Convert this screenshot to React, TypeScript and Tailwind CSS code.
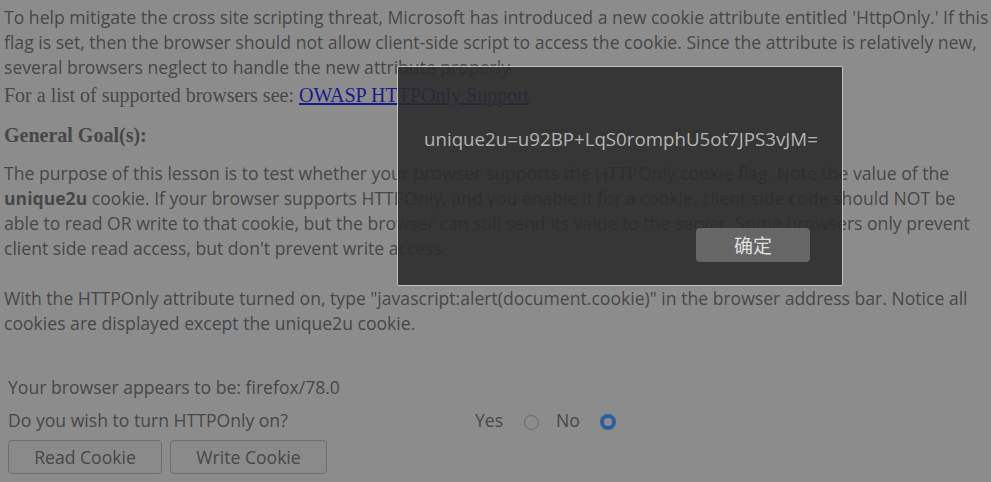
import React from 'react';

const sans = "font-['Open_Sans','Noto_Sans',sans-serif]";
const serif = "font-['Liberation_Serif','Times_New_Roman',serif]";

function Radio({ checked }: { checked?: boolean }) {
  return checked ? (
    <span className="inline-block w-[16px] h-[16px] rounded-full border-[4px] border-[#2d5f9c] bg-[#8c8c8c]" />
  ) : (
    <span className="inline-block w-[15px] h-[15px] rounded-full border border-[#6a6a6a] bg-[#8c8c8c]" />
  );
}

export default function App() {
  return (
    <div className={`relative w-[991px] h-[482px] overflow-hidden bg-[#8c8c8c] text-[#474747] ${sans}`}>
      <div className="px-[4px] pt-[5px] whitespace-nowrap">
        <p className="text-[17.6px] leading-[25px]">
          To help mitigate the cross site scripting threat, Microsoft has introduced a new cookie attribute entitled 'HttpOnly.' If this<br />
          flag is set, then the browser should not allow client-side script to access the cookie. Since the attribute is relatively new,<br />
          several browsers neglect to handle the new attribute properly.
        </p>
        <p className={`${serif} text-[20px] leading-[26px] mt-[2px]`}>
          For a list of supported browsers see:{' '}
          <a className="text-[#1a1a8c] underline">OWASP HTTPOnly Support</a>
        </p>
        <h3 className={`${serif} text-[20px] font-bold leading-[26px] mt-[14px]`}>General Goal(s):</h3>
        <p className="text-[17.6px] leading-[25px] mt-[13px]">
          The purpose of this lesson is to test whether your browser supports the HTTPOnly cookie flag. Note the value of the<br />
          <b>unique2u</b> cookie. If your browser supports HTTPOnly, and you enable it for a cookie, client side code should NOT be<br />
          able to read OR write to that cookie, but the browser can still send its value to the server. Some browsers only prevent<br />
          client side read access, but don't prevent write access.
        </p>
        <p className="text-[17.6px] leading-[25px] mt-[25px]">
          With the HTTPOnly attribute turned on, type "javascript:alert(document.cookie)" in the browser address bar. Notice all<br />
          cookies are displayed except the unique2u cookie.
        </p>
      </div>

      <div className="pl-[8px] mt-[39px] text-[17.6px]">
        <div className="leading-[25px]">Your browser appears to be: firefox/78.0</div>
        <div className="flex items-center mt-[8px] leading-[25px]">
          <span className="w-[467px]">Do you wish to turn HTTPOnly on?</span>
          <span>Yes</span>
          <span className="ml-[21px] mt-[3px] flex"><Radio /></span>
          <span className="ml-[17px]">No</span>
          <span className="ml-[20px] mt-[3px] flex"><Radio checked /></span>
        </div>
        <div className="flex gap-[8px] mt-[7px]">
          <button className="w-[154px] h-[34px] rounded-[4px] border border-[#6e6e6e] bg-[#8a8a8a] text-[#474747] text-[17.6px]">Read Cookie</button>
          <button className="w-[157px] h-[34px] rounded-[4px] border border-[#6e6e6e] bg-[#8a8a8a] text-[#474747] text-[17.6px]">Write Cookie</button>
        </div>
      </div>

      {/* alert dialog */}
      <div className="absolute left-[397px] top-[66px] w-[446px] h-[220px] border border-[#c4c4c4] rounded-[2px] bg-[rgba(44,44,44,0.9)] flex flex-col">
        <div className="pl-[26px] pt-[59px] text-[18.7px] leading-[25px] text-[#b4b4b4]">unique2u=u92BP+LqS0romphU5ot7JPS3vJM=</div>
        <div className="flex justify-end pr-[32px] mt-[77px]">
          <button className={`w-[114px] h-[34px] rounded-[4px] bg-[#666666] text-[#e0e0e0] text-[19px] font-['Noto_Sans_CJK_SC',sans-serif]`}>确定</button>
        </div>
      </div>
    </div>
  );
}
